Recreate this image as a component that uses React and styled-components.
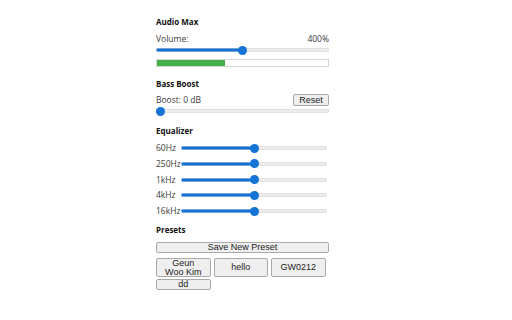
import React from "react";
import styled, { createGlobalStyle } from "styled-components";

const GlobalStyle = createGlobalStyle`
  html, body {
    margin: 0;
    padding: 0;
    background: #fff;
  }
  * {
    box-sizing: border-box;
  }
`;

const BLUE = "#1573d6";

const Page = styled.div`
  width: 512px;
  height: 320px;
  padding: 17px 0 0 156px;
  font-family: "Open Sans", "Noto Sans", sans-serif;
`;

const Panel = styled.div`
  width: 173px;
  display: flex;
  flex-direction: column;
`;

const Section = styled.section`
  display: flex;
  flex-direction: column;
  margin-bottom: ${(p) => p.$mb ?? 12}px;
`;

const Title = styled.h3`
  margin: 0 0 ${(p) => p.$mb ?? 7}px;
  font-size: 8px;
  line-height: 10px;
  font-weight: 700;
  color: #111;
`;

const LabelRow = styled.div`
  display: flex;
  justify-content: space-between;
  align-items: center;
  font-size: 8.5px;
  line-height: 10px;
  color: #3a3a3a;
`;

/* the 4px track sits in a 9px band so the thumb has room */
const Range = styled.input.attrs({ type: "range" })`
  -webkit-appearance: none;
  appearance: none;
  display: block;
  width: ${(p) => p.$width || "100%"};
  height: 4px;
  margin: ${(p) => (p.$mt ?? 0) + 2.5}px 0 2.5px;
  padding: 0;
  border-radius: 2px;
  outline: none;
  background: linear-gradient(
    to right,
    ${BLUE} 0,
    ${BLUE} ${(p) => p.$fill}%,
    #ececec ${(p) => p.$fill}%,
    #ececec 100%
  );
  box-shadow: inset 0 0 0 0.5px #d4d4d4;

  &::-webkit-slider-thumb {
    -webkit-appearance: none;
    appearance: none;
    width: 9px;
    height: 9px;
    border-radius: 50%;
    background: ${BLUE};
    border: none;
  }
`;

const Meter = styled.div`
  height: 8px;
  margin-top: 4.5px;
  border: 1px solid #d6d6d6;
  background: #fff;

  div {
    height: 100%;
    background: #45b04a;
  }
`;

const Button = styled.button`
  font-family: "Liberation Sans", Arial, sans-serif;
  font-size: 9px;
  line-height: ${(p) => p.$lh ?? 9}px;
  color: #222;
  background: #efefef;
  border: 1px solid #a9a9a9;
  border-radius: 2px;
  padding: 0 ${(p) => p.$px ?? 2}px;
  width: ${(p) => p.$width || "auto"};
  cursor: pointer;
`;

const EqGrid = styled.div`
  display: flex;
  flex-direction: column;
  gap: 5.75px;
`;

const EqRow = styled.div`
  display: grid;
  grid-template-columns: 25px 146px;
  align-items: center;
  height: 10px;
  font-size: 8.5px;
  line-height: 10px;
  color: #3a3a3a;
`;

const PresetList = styled.div`
  display: flex;
  flex-wrap: wrap;
  column-gap: 3px;
  row-gap: 2px;
  margin-top: 5px;
`;

// thumb centre position -> percentage of track for the fill
const fillFor = (value, width, thumb = 9) =>
  ((thumb / 2 + value * (width - thumb)) / width) * 100;

const bands = ["60Hz", "250Hz", "1kHz", "4kHz", "16kHz"];
const presets = ["Geun Woo Kim", "hello", "GW0212", "dd"];

export default function App() {
  return (
    <>
      <GlobalStyle />
      <Page>
        <Panel>
          <Section>
            <Title>Audio Max</Title>
            <LabelRow>
              <span>Volume:</span>
              <span>400%</span>
            </LabelRow>
            <Range
              $mt={1.5}
              min={0}
              max={800}
              defaultValue={400}
              $fill={fillFor(0.5, 173)}
            />
            <Meter>
              <div style={{ width: "40%" }} />
            </Meter>
          </Section>

          <Section $mb={10.5}>
            <Title $mb={5}>Bass Boost</Title>
            <LabelRow>
              <span>Boost: 0 dB</span>
              <Button $width="36px" $lh={10} $px={3}>
                Reset
              </Button>
            </LabelRow>
            <Range
              $mt={0.5}
              min={0}
              max={30}
              defaultValue={0}
              $fill={fillFor(0, 173)}
            />
          </Section>

          <Section $mb={9}>
            <Title>Equalizer</Title>
            <EqGrid>
              {bands.map((b) => (
                <EqRow key={b}>
                  <span>{b}</span>
                  <Range
                    min={-12}
                    max={12}
                    defaultValue={0}
                    $fill={fillFor(0.5, 146)}
                  />
                </EqRow>
              ))}
            </EqGrid>
          </Section>

          <Section $mb={0}>
            <Title>Presets</Title>
            <Button $width="100%" $lh={9}>
              Save New Preset
            </Button>
            <PresetList>
              {presets.map((p) => (
                <Button
                  key={p}
                  $width="54.5px"
                  $px={6}
                  $lh={p === "dd" ? 9 : 8.5}
                >
                  {p}
                </Button>
              ))}
            </PresetList>
          </Section>
        </Panel>
      </Page>
    </>
  );
}
